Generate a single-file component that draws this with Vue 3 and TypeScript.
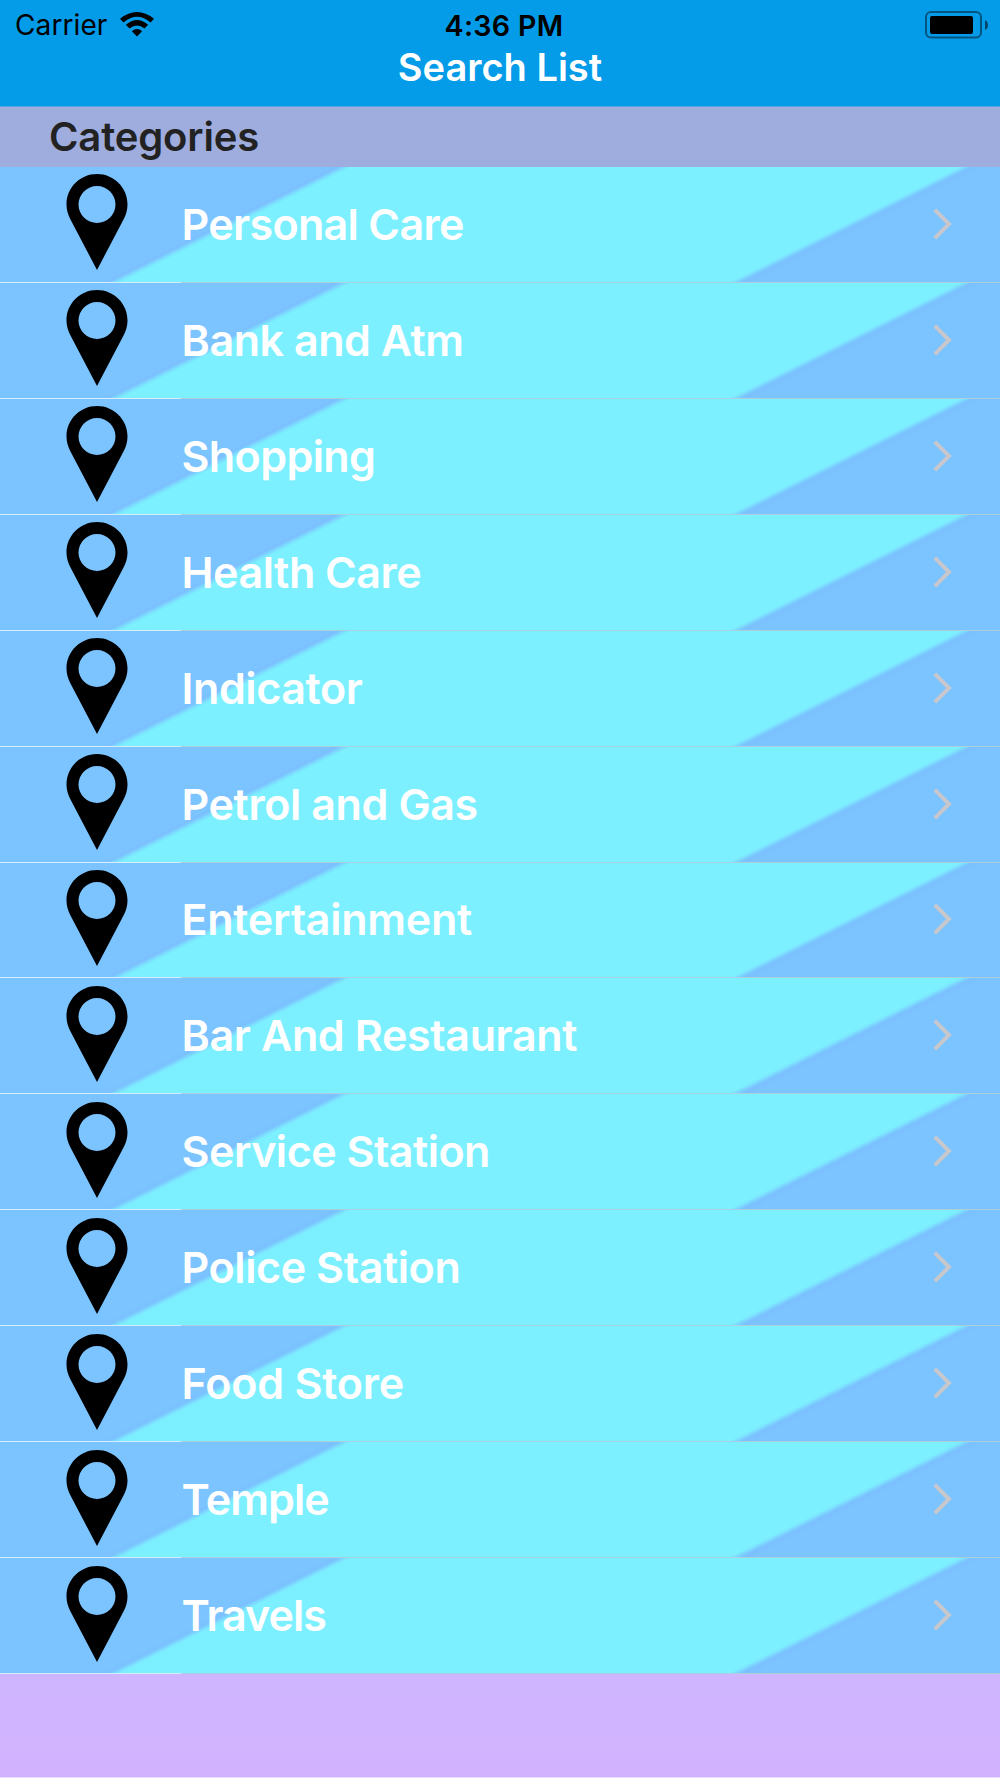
<script setup lang="ts">
interface Category {
  name: string
  tracking: number
}

const categories: Category[] = [
  { name: 'Personal Care', tracking: -0.66 },
  { name: 'Bank and Atm', tracking: -0.45 },
  { name: 'Shopping', tracking: -0.6 },
  { name: 'Health Care', tracking: -0.47 },
  { name: 'Indicator', tracking: -0.4 },
  { name: 'Petrol and Gas', tracking: -0.38 },
  { name: 'Entertainment', tracking: -0.25 },
  { name: 'Bar And Restaurant', tracking: -0.36 },
  { name: 'Service Station', tracking: -0.5 },
  { name: 'Police Station', tracking: -0.4 },
  { name: 'Food Store', tracking: -0.2 },
  { name: 'Temple', tracking: -0.9 },
  { name: 'Travels', tracking: -1 },
]
</script>

<template>
  <div class="screen">
    <header class="nav">
      <div class="status">
        <div class="carrier">
          <span class="carrier-name">Carrier</span>
          <svg class="wifi" width="34" height="25" viewBox="0 0 34 25">
            <path d="M0 6.8Q17-6.6 34 6.8L30.6 10.6Q17-.9 3.4 10.6Z" />
            <path d="M5.9 12.8Q17 3.2 28.1 12.8L24.5 16.6Q17 10.4 9.5 16.6Z" />
            <path d="M11.9 19.2Q17 14.8 22.1 19.2L17 24.5Z" />
          </svg>
        </div>
        <span class="time">4:36 PM</span>
        <svg class="battery" width="63" height="28" viewBox="0 0 63 28">
          <rect x="1" y="1" width="55" height="25.5" rx="5" fill="none" stroke="#000" stroke-opacity=".45" stroke-width="2" />
          <rect x="5" y="5" width="43" height="18" rx="2" />
          <path d="M60 9Q63 10.5 63 14T60 19Z" fill-opacity=".55" />
        </svg>
      </div>
      <h1 class="title">Search List</h1>
    </header>
    <h2 class="section">Categories</h2>
    <ul class="list">
      <li v-for="c in categories" :key="c.name" class="row">
        <svg class="pin" width="62" height="96" viewBox="0 0 62 96">
          <path fill-rule="evenodd" d="M31 0C48 0 61.5 13.5 61.5 30.5C61.5 36 60 41 57 46.500L31 96L5 46.500C2 41 .5 36 .5 30.500C.5 13.500 14 0 31 0ZM31 12A18.500 18.500 0 1 0 31 49A18.500 18.500 0 1 0 31 12Z" />
        </svg>
        <span class="label" :style="{ letterSpacing: c.tracking + 'px' }">{{ c.name }}</span>
        <svg class="chevron" width="20" height="32" viewBox="0 0 20 32">
          <path d="M1.800 1.800L16 16L1.800 30.200" fill="none" stroke="#c7c7cc" stroke-width="4" />
        </svg>
      </li>
    </ul>
    <div class="footer"></div>
  </div>
</template>

<style>
body {
  margin: 0;
}
</style>

<style scoped>
.screen {
  display: flex;
  flex-direction: column;
  width: 1000px;
  height: 1778px;
  overflow: hidden;
  background: #cfb5ff;
  font-family: Inter, "Liberation Sans", sans-serif;
}
.nav {
  box-sizing: border-box;
  height: 107px;
  flex: none;
  background: #049be8;
  border-bottom: 1px solid #5aa3e2;
}
.status {
  display: grid;
  grid-template-columns: 1fr auto 1fr;
  height: 49px;
  align-items: center;
  padding: 0 12px 0 15px;
  font-size: 28px;
  line-height: 49px;
}
.carrier {
  display: flex;
  align-items: center;
  gap: 13px;
  padding-top: 1px;
}
.carrier-name {
  letter-spacing: 0.1px;
}
.wifi {
  margin-top: -3px;
}
.time {
  padding-left: 5px;
  font-size: 28.600px;
  font-weight: 600;
  letter-spacing: 0.3px;
}
.battery {
  justify-self: end;
  margin-top: -1px;
}
.title {
  margin: 0;
  text-align: center;
  font-size: 38px;
  line-height: 36px;
  font-weight: 600;
  color: #fff;
}
.section {
  box-sizing: border-box;
  flex: none;
  height: 60px;
  margin: 0;
  padding-left: 49px;
  background: #9eacde;
  color: #222;
  font-size: 40px;
  line-height: 60px;
  letter-spacing: -0.15px;
  font-weight: 600;
}
.list {
  margin: 0;
  padding: 0;
  list-style: none;
}
.row {
  display: flex;
  align-items: center;
  box-sizing: border-box;
  height: 115.937px;
  padding: 0 47.500px 2px 65.500px;
  background:
    linear-gradient(90deg, #d5eeff 181px, #a9cfe0 181px) 0 100% / 100% 1px no-repeat,
    linear-gradient(153.435deg, #7bc4ff 148px, #7bbfff 151px, #7df0ff 157px, #7df0ff 429px, #7bbfff 435px, #7bc4ff 439px);
}
.pin {
  flex: none;
  margin-top: -3px;
}
.label {
  flex: 1;
  margin-left: 54px;
  color: #fff;
  font-size: 43px;
  line-height: 60px;
  font-weight: 600;
  white-space: nowrap;
}
.chevron {
  flex: none;
}
.footer {
  flex: 1;
  background: linear-gradient(#cfb5ff, #d2b2fe);
  border-bottom: 1px solid #eadcff;
}
</style>
